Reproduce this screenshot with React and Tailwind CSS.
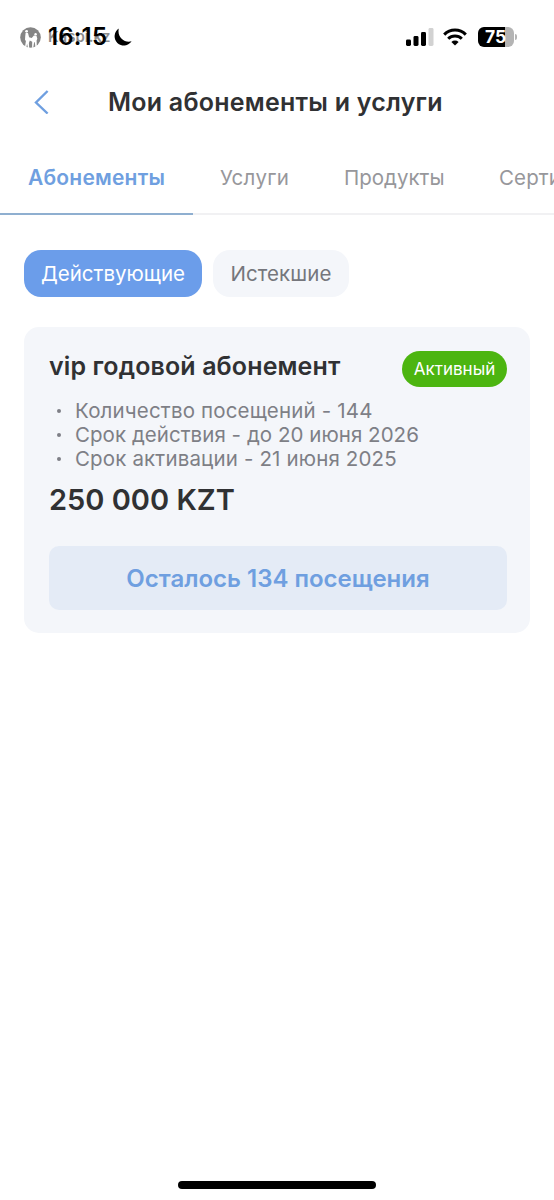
const tabs = [
  { label: 'Абонементы', active: true, cls: 'w-[193px] pl-[28px] text-[21px]', text: 'tracking-[0.2px]' },
  { label: 'Услуги', cls: 'w-[124px] pl-[27px] pt-[4px] text-[20.5px]', text: 'tracking-[0.3px]' },
  { label: 'Продукты', cls: 'w-[155px] pl-[27px] pt-[4px] text-[20.5px]', text: 'tracking-[0px]' },
  { label: 'Сертификаты', cls: 'w-[180px] pl-[27px] pt-[4px] text-[20.5px]', text: 'tracking-[0.1px]' },
];

const details = [
  { text: 'Количество посещений - 144', cls: 'tracking-[0.17px]' },
  { text: 'Срок действия - до 20 июня 2026', cls: 'tracking-[0.04px]' },
  { text: 'Срок активации - 21 июня 2025', cls: 'tracking-[0.15px]' },
];

function StatusBar() {
  return (
    <div className="flex h-[74px] items-center justify-between pr-[37px] pl-[20px]">
      <div className="flex items-center">
        <svg className="h-[21px] w-[21px]" viewBox="0 0 21 21">
          <circle cx="10.5" cy="10.5" r="10.3" fill="#858585" />
          <circle cx="6.6" cy="4.3" r="1.4" fill="#fff" />
          <circle cx="15.6" cy="7.2" r="1.2" fill="#fff" />
          <path
            d="M5.6 5.9l2.4.1 1.1 4.2 2.6.7 2.2-2.3 2.600.1.8 3-.7 1.700.2 5.600-1.400.800-.600-4.600-.700.1-.800 5.300-1.200.200.1-6-2.400-1.200-.9 2.300.3 5.400-1.200-.200-.900-4.400-.800 3.800-1.300-.600.9-6-.9-1.200.2-3.100z"
            fill="#fff"
          />
        </svg>
        <div className="relative ml-[7px] h-[30px] w-[64px] whitespace-nowrap">
          <span className="absolute top-[5px] left-0 text-[15px] leading-[20px] font-semibold text-[#8d8d8d]">
            Kaspi.kz
          </span>
          <span className="absolute top-0 left-0 text-[24px] leading-[30px] font-semibold tracking-[0.15px] text-black">
            16:15
          </span>
        </div>
        <svg className="ml-px h-[19px] w-[19px]" viewBox="0 0 19 19">
          <path d="M5.8.6A9.2 9.2 0 1 0 18.6 13.2C12 15.4 3.8 9.5 5.8.6z" fill="#000" />
        </svg>
      </div>
      <div className="flex items-center">
        <svg className="h-[18px] w-[28px]" viewBox="0 0 28 18">
          <rect x="0" y="11.5" width="5" height="6.5" rx="1.4" />
          <rect x="7.5" y="8" width="5" height="10" rx="1.4" />
          <rect x="15" y="4" width="5" height="14" rx="1.4" />
          <rect x="22.5" y="0" width="5" height="18" rx="1.4" fill="#d2d2d2" />
        </svg>
        <svg className="ml-[9px] h-[18px] w-[24px]" viewBox="0 0 24 18" fill="none" stroke="#000" strokeWidth="3">
          <path d="M1.2 6.6a15.2 15.2 0 0 1 21.6 0" />
          <path d="M5.2 10.7a9.6 9.6 0 0 1 13.6 0" />
          <path d="M12 17.6l-3.6-3.5a5.1 5.1 0 0 1 7.2 0z" fill="#000" stroke="none" />
        </svg>
        <div className="ml-[11px] flex h-[20px] w-[36px] items-center justify-center rounded-[6px] bg-[linear-gradient(to_right,#000_75%,#b4b4b4_75%)]">
          <span className="pr-px text-[17.5px] leading-[20px] font-bold text-white">75</span>
        </div>
        <div className="ml-px h-[6px] w-[2px] rounded-r-full bg-[#b4b4b4]" />
      </div>
    </div>
  );
}

export default function App() {
  return (
    <div className="flex h-[1200px] w-[554px] flex-col overflow-hidden bg-white font-['Inter','Noto_Sans',sans-serif]">
      <StatusBar />
      <header className="grid h-[56px] grid-cols-[108px_1fr] items-center">
        <svg className="ml-[34px] h-[24px] w-[15px]" viewBox="0 0 15 24" fill="none" stroke="#6f9fe0" strokeWidth="2.4">
          <path d="M13.6 1L2 12.5l11.6 11" />
        </svg>
        <h1 className="pb-px text-[25px] leading-[32px] font-semibold tracking-[0.23px] whitespace-nowrap text-[#303133]">
          Мои абонементы и услуги
        </h1>
      </header>
      <nav className="mt-[10px] flex h-[75px] border-b-2 border-[#f1f1f3] whitespace-nowrap">
        {tabs.map((t) => (
          <button
            key={t.label}
            className={`-mb-[2px] flex shrink-0 items-center text-left ${t.cls} ${
              t.active
                ? 'border-b-2 border-[#8fafd0] pt-[2px] font-semibold text-[#6f9fe0]'
                : 'border-b-2 border-transparent text-[#97979b]'
            }`}
          >
            <span className={t.text}>{t.label}</span>
          </button>
        ))}
      </nav>
      <div className="mt-[35px] flex h-[47px] shrink-0 gap-[11px] pl-[24px] text-[20.5px]">
        <button className="w-[178px] rounded-[17px] bg-[#6b9dea] pt-px text-white">Действующие</button>
        <button className="w-[136px] rounded-[17px] bg-[#f4f6fa] pt-px tracking-[0.1px] text-[#75767c]">Истекшие</button>
      </div>
      <section className="mt-[30px] ml-[24px] flex h-[306px] w-[506px] shrink-0 flex-col rounded-[15px] bg-[#f4f6fa] pt-[24px] pr-[23px] pl-[25px]">
        <div className="flex h-[36px] justify-between">
          <h2 className="text-[25px] leading-[30px] font-semibold tracking-[0.12px] whitespace-nowrap text-[#303133]">
            vip годовой абонемент
          </h2>
          <span className="flex h-[36px] w-[105px] items-center justify-center rounded-full bg-[#4cb510] pt-px text-[17px] text-white">
            Активный
          </span>
        </div>
        <ul className="mt-[12px] text-[20.5px] leading-[24px] whitespace-nowrap text-[#7e7f86]">
          {details.map((d) => (
            <li key={d.text} className={`flex items-center ${d.cls}`}>
              <span className="mr-[14px] ml-[8px] h-[4px] w-[4px] rounded-full bg-[#7e7f86]" />
              {d.text}
            </li>
          ))}
        </ul>
        <div className="mt-[11px] text-[29px] leading-[36px] font-semibold text-[#303133]">250 000 KZT</div>
        <button className="mt-[28px] h-[64px] rounded-[10px] bg-[#e4ebf6] pt-[2px] text-[24px] font-semibold text-[#6f9fe0]">
          Осталось 134 посещения
        </button>
      </section>
      <div className="mx-auto mt-auto mb-[11px] h-[8px] w-[198px] rounded-full bg-black" />
    </div>
  );
}
